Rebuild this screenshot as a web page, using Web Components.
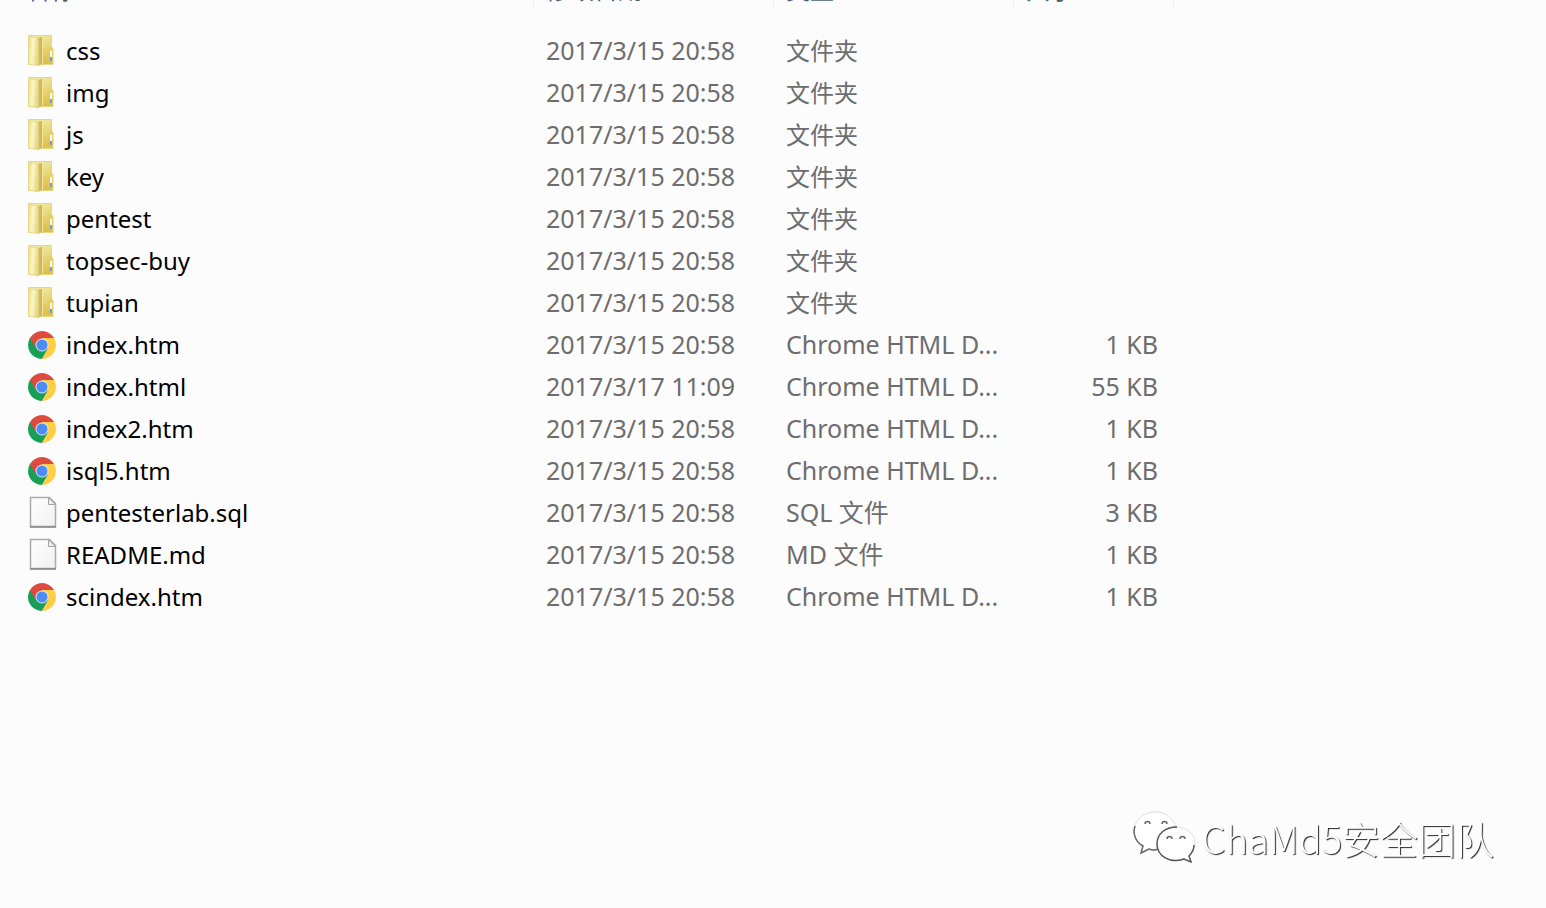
<!DOCTYPE html>
<html lang="zh-CN">
<head>
<meta charset="utf-8">
<meta name="viewport" content="width=device-width, initial-scale=1">
<title>文件列表</title>
<style>
body { margin: 0; background: #fcfcfc; }
</style>
</head>
<body>
<file-window>
  <file-list></file-list>
  <account-mark slot="mark">ChaMd5安全团队</account-mark>
</file-window>

<template id="window-template">
  <style>
    :host { display: flex; flex-direction: column; min-height: 100vh; box-sizing: border-box; font-family: "Noto Sans", "Noto Sans CJK SC", sans-serif; }
    main { padding-right: 372px; }
    footer { margin-top: auto; display: flex; justify-content: flex-end; padding: 0 52px 42px 0; }
  </style>
  <main><slot></slot></main>
  <footer><slot name="mark"></slot></footer>
</template>

<template id="list-template">
  <style>
    :host { display: block; }
    table { width: 100%; table-layout: fixed; border-collapse: collapse; font-size: 24px; line-height: 40px; color: #6d6d6d; }
    .date, .type { width: 240px; }
    .size { width: 160px; }
    th { padding: 0 0 22px; font-weight: 400; text-align: left; color: #4c607a; line-height: 24px; }
    th div { display: flex; align-items: flex-end; height: 8px; padding: 0 12px; overflow: hidden; border-right: 1px solid #f0f0f2; }
    th span { margin-bottom: 6px; }
    th:first-child div { padding-left: 26px; }
    td { height: 42px; padding: 0 12px; white-space: nowrap; overflow: hidden; text-overflow: ellipsis; }
    td:first-child { padding-left: 26px; color: #000; }
    td:last-child { text-align: right; padding-right: 16px; }
    .wide { font-size: 25px; vertical-align: top; }
    .name { display: flex; align-items: center; gap: 8px; }
  </style>
  <table>
    <colgroup><col><col class="date"><col class="type"><col class="size"></colgroup>
    <thead><tr>
      <th scope="col"><div><span>名称</span></div></th>
      <th scope="col"><div><span>修改日期</span></div></th>
      <th scope="col"><div><span>类型</span></div></th>
      <th scope="col"><div><span>大小</span></div></th>
    </tr></thead>
    <tbody></tbody>
  </table>
</template>

<template id="icon-template">
  <style>
    :host { display: block; width: 32px; height: 34px; }
    svg { display: none; width: 32px; height: 34px; }
    :host([kind="folder"]) .folder, :host([kind="chrome"]) .chrome, :host([kind="page"]) .page { display: block; }
  </style>
  <svg class="folder" viewBox="0 1 32 34" aria-hidden="true">
    <defs>
      <linearGradient id="back" x1="0" y1="0" x2="0.4" y2="1"><stop offset="0" stop-color="#f6efae"/><stop offset=".5" stop-color="#eadb83"/><stop offset="1" stop-color="#dfc04c"/></linearGradient>
      <linearGradient id="flap" x1="0" x2="1" y2=".25"><stop offset="0" stop-color="#e9dc8b"/><stop offset=".5" stop-color="#fbf6c4"/><stop offset="1" stop-color="#e6d784"/></linearGradient>
      <linearGradient id="fold" x1="0" x2="1"><stop offset="0" stop-color="#d6c262"/><stop offset="1" stop-color="#ccb654"/></linearGradient>
    </defs>
    <path d="M2.500 2.500h23v11l1.500 2v16H2.500z" fill="url(#back)" stroke="#e4d683"/>
    <path d="M11 5l5-1v27l-4 2z" fill="url(#fold)"/>
    <path d="M2.500 3.500l8 1q2 .3 2 2.500v26l-8-1.500q-2-.5-2-2z" fill="url(#flap)" stroke="#e2d485" stroke-width=".7"/>
    <path d="M16.500 5v26" stroke="#f0e49a"/>
    <path d="M25 18v7" stroke="#fff" stroke-width="2"/>
    <path d="M25 24v4" stroke="#6e9cc9" stroke-width="2"/>
  </svg>
  <svg class="chrome" viewBox="0 -1 32 34" aria-hidden="true">
    <path d="M16 16L3.880 9A14 14 0 0 0 16 30l6.060-10.500z" fill="#199e58"/>
    <path d="M16 9h12.120A14 14 0 0 1 16 30l6.060-10.500z" fill="#ffce43"/>
    <path d="M3.880 9L9.940 19.500 16 16 16 9h12.120A14 14 0 0 0 3.880 9z" fill="#dd4b3e"/>
    <circle cx="16" cy="16" r="6.500" fill="#dde6f8"/>
    <circle cx="16" cy="16" r="5.500" fill="#4d8bf5"/>
  </svg>
  <svg class="page" viewBox="0 0 32 34" aria-hidden="true">
    <defs><linearGradient id="sheet" x1="0" y1="0" x2="1" y2="1"><stop offset="0" stop-color="#fff"/><stop offset="1" stop-color="#f0f0f0"/></linearGradient></defs>
    <path d="M4.500 1.500h19l6 6v23h-25z" fill="url(#sheet)" stroke="#aaa" stroke-width="1.500"/>
    <path d="M4 31h26" stroke="#858585" stroke-width="1.500"/>
    <path d="M22.500 2v6.500h7z" fill="#f0f0f0" stroke="#a5a5a5"/>
  </svg>
</template>

<template id="mark-template">
  <style>
    :host { display: flex; align-items: center; gap: 6px; font: 38px/56px "Noto Sans CJK SC", sans-serif; font-weight: 300; color: #fff; text-shadow: 1px 1px 1px #222; opacity: .99; will-change: opacity; }
    svg { width: 64px; height: 56px; flex: none; }
  </style>
  <svg viewBox="0 0 64 56" fill="none" aria-hidden="true">
    <path d="M44 17C41 7 32 1 22 2 10 3 2 11 2 21c0 7 3 12 9 15l-2 7 8-4q4 2 9 1" fill="#fff" stroke="#ddd"/>
    <path d="M3 16c-3 9 2 17 8 20l-2 7 8-4q5 2 9 0" stroke="#666" stroke-width="1.500"/>
    <path d="M25 34c0-10 8-17 19-17s19 7 19 16c0 6-3 10-6 13l2 6-7-3c-14 5-27-3-27-15z" fill="#fff" stroke="#ddd"/>
    <path d="M45 17c-12 0-20 7-20 17 0 12 13 20 27 15l7 3-2-6c3-3 5-7 5-11" stroke="#555" stroke-width="1.500"/>
    <path d="M13 14a2.500 2.500 0 0 1 5 0M30 14a2.500 2.500 0 0 1 5 0M35 29a2.500 2.500 0 0 1 5 0M48 29a2.500 2.500 0 0 1 5 0" stroke="#666" stroke-width="1.500"/>
  </svg>
  <span><slot></slot></span>
</template>

<script>
class TemplateElement extends HTMLElement {
  constructor() {
    super();
    const source = document.getElementById(this.constructor.template);
    this.attachShadow({ mode: "open" }).append(source.content.cloneNode(true));
  }
}
class FileWindow extends TemplateElement { static template = "window-template"; }
class FileIcon extends TemplateElement { static template = "icon-template"; }
class AccountMark extends TemplateElement { static template = "mark-template"; }
class FileList extends TemplateElement {
  static template = "list-template";
  connectedCallback() {
    const day = "2017/3/15 20:58", html = "Chrome HTML D...";
    const folders = ["css", "img", "js", "key", "pentest", "topsec-buy", "tupian"];
    const files = [
      ...folders.map(name => ["folder", name, day, "文件夹", ""]),
      ["chrome", "index.htm", day, html, "1 KB"],
      ["chrome", "index.html", "2017/3/17 11:09", html, "55 KB"],
      ["chrome", "index2.htm", day, html, "1 KB"],
      ["chrome", "isql5.htm", day, html, "1 KB"],
      ["page", "pentesterlab.sql", day, "SQL 文件", "3 KB"],
      ["page", "README.md", day, "MD 文件", "1 KB"],
      ["chrome", "scindex.htm", day, html, "1 KB"]
    ];
    this.shadowRoot.querySelector("tbody").innerHTML = files.map(([kind, name, date, type, size]) =>
      `<tr><td><div class="name"><file-icon kind="${kind}"></file-icon><span>${name}</span></div></td><td class="wide">${date}</td><td class="${kind === "folder" ? "" : "wide"}">${type}</td><td class="wide">${size}</td></tr>`).join("");
  }
}
customElements.define("file-icon", FileIcon);
customElements.define("file-list", FileList);
customElements.define("account-mark", AccountMark);
customElements.define("file-window", FileWindow);
</script>
</body>
</html>
